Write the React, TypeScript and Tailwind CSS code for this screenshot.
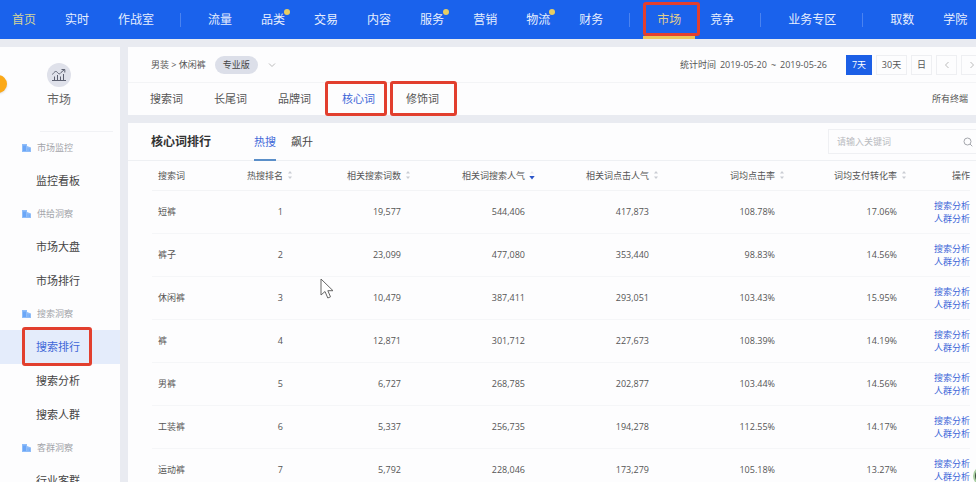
import React, { useState } from 'react';

const navGroups = [
  [{ label: '首页' }, { label: '实时' }, { label: '作战室' }],
  [
    { label: '流量' },
    { label: '品类', dot: true },
    { label: '交易' },
    { label: '内容' },
    { label: '服务', dot: true },
    { label: '营销' },
    { label: '物流', dot: true },
    { label: '财务' },
  ],
  [{ label: '市场' }, { label: '竞争' }],
  [{ label: '业务专区' }],
  [{ label: '取数' }, { label: '学院' }],
] as { label: string; dot?: boolean }[][];

const sideGroups = [
  { title: '市场监控', items: ['监控看板'] },
  { title: '供给洞察', items: ['市场大盘', '市场排行'] },
  { title: '搜索洞察', items: ['搜索排行', '搜索分析', '搜索人群'] },
  { title: '客群洞察', items: ['行业客群'] },
];

const wordTabs = ['搜索词', '长尾词', '品牌词', '核心词', '修饰词'];

const columns = [
  { label: '热搜排名', width: 'w-[90px]' },
  { label: '相关搜索词数', width: 'w-[118px]' },
  { label: '相关词搜索人气', width: 'w-[124px]', sorted: true },
  { label: '相关词点击人气', width: 'w-[124px]' },
  { label: '词均点击率', width: 'w-[126px]' },
  { label: '词均支付转化率', width: 'w-[122px]' },
];

const rows = [
  ['短裤', '1', '19,577', '544,406', '417,873', '108.78%', '17.06%'],
  ['裤子', '2', '23,099', '477,080', '353,440', '98.83%', '14.56%'],
  ['休闲裤', '3', '10,479', '387,411', '293,051', '103.43%', '15.95%'],
  ['裤', '4', '12,871', '301,712', '227,673', '108.39%', '14.19%'],
  ['男裤', '5', '6,727', '268,785', '202,877', '103.44%', '14.56%'],
  ['工装裤', '6', '5,337', '256,735', '194,278', '112.55%', '14.17%'],
  ['运动裤', '7', '5,792', '228,046', '173,279', '105.18%', '13.27%'],
];

function Marker({ className }: { className: string }) {
  return <span className={`pointer-events-none absolute z-10 rounded-[3px] border-3 border-[#e23f2e] ${className}`} />;
}

function Chevron({ className, d }: { className: string; d: string }) {
  return (
    <svg viewBox="0 0 8 8" fill="none" stroke="currentColor" className={className} aria-hidden="true">
      <path d={d} />
    </svg>
  );
}

function SortIcon({ sorted }: { sorted?: boolean }) {
  return (
    <svg viewBox="0 0 6 10" className="h-[10px] w-[6px] shrink-0" aria-hidden="true">
      <path d="M3 1 5 3.6H1Z" fill={sorted ? '#e3e5ea' : '#c9ccd3'} />
      <path d={sorted ? 'M0.3 6H5.7L3 9.4Z' : 'M1 6.4H5L3 9Z'} fill={sorted ? '#2b55c8' : '#c9ccd3'} />
    </svg>
  );
}

function TopNav() {
  return (
    <header className="h-[39px] overflow-hidden bg-[#1a62ec]">
      <nav className="flex h-full items-center pl-3 text-[12px] text-[#e6eefd]">
        {navGroups.map((group, i) => (
          <div
            key={i}
            className={i === 0 ? 'flex h-full shrink-0 items-center' : 'ml-[26px] flex h-full shrink-0 items-center'}
          >
            {i > 0 && <span className="mr-[27px] h-[14px] w-px bg-[#4b83f0]" />}
            <ul className="-mx-[14px] flex h-full gap-px">
              {group.map(({ label, dot }) => {
                const active = label === '市场';
                return (
                  <li key={label} className="relative">
                    <a
                      href="#"
                      className={`flex h-full items-center whitespace-nowrap px-[14px] ${
                        active ? 'border-b-3 border-[#e9c65a] pt-[3px] text-[#e3cf8d]' : ''
                      } ${label === '首页' ? 'text-[#d3d49a]' : ''}`}
                    >
                      {label}
                    </a>
                    {dot && <span className="absolute right-[9px] top-[9px] size-[6px] rounded-full bg-[#e8cd62]" />}
                    {active && <Marker className="-right-[5px] left-0 top-[2px] h-[34px]" />}
                  </li>
                );
              })}
            </ul>
          </div>
        ))}
      </nav>
    </header>
  );
}

function Sidebar() {
  return (
    <aside className="relative w-[120px] shrink-0 bg-[#fdfdfe]">
      <span className="absolute -left-[11px] top-[28px] size-[18px] rounded-full bg-[#fba919] shadow" />
      <div className="mr-[7px] ml-10 h-[85px] border-b border-[#f1f2f5]">
        <div className="flex w-[38px] flex-col items-center pt-4">
          <span className="flex size-6 items-center justify-center rounded-full bg-[#dfe1ea] text-[#5c6070]">
            <svg viewBox="0 0 16 16" fill="none" stroke="currentColor" className="size-4" aria-hidden="true">
              <path d="M1 13.5H15M3.5 13V9.5M6.5 13V8M9.5 13V9.5M12.5 13V7" />
              <path d="M1.5 7.5C3.5 4.5 5 3.5 6.5 5.5S9 7 10 5.5L13.5 2.5M10.5 2.5H13.8V5.5" />
            </svg>
          </span>
          <span className="mt-1 text-[12px] leading-[18px] text-[#666]">市场</span>
        </div>
      </div>
      {sideGroups.map((group) => (
        <section key={group.title}>
          <h2 className="flex h-8 items-center gap-[6px] pl-[22px] text-[9px] text-[#a3a5aa]">
            <svg viewBox="0 0 9 8" className="h-2 w-[9px]" aria-hidden="true">
              <path d="M0 0H5V2L9 3.5V8H0Z" fill="#8fbdf9" />
              <path d="M1 1.5H4V7H1Z" fill="#6aa6f7" />
              <path d="M6 4V7M7.5 4.5V7" stroke="#6aa6f7" strokeWidth="0.7" />
            </svg>
            {group.title}
          </h2>
          <ul>
            {group.items.map((item) => {
              const active = item === '搜索排行';
              return (
                <li key={item} className="relative">
                  <a
                    href="#"
                    className={`flex h-[34px] items-center pl-9 text-[11px] ${
                      active ? 'bg-[#e4ecfb] text-[#4067d8]' : 'text-[#444]'
                    }`}
                  >
                    {item}
                  </a>
                  {active && <Marker className="-top-[3px] left-[22px] h-[39px] w-[70px]" />}
                </li>
              );
            })}
          </ul>
        </section>
      ))}
    </aside>
  );
}

function FilterCard() {
  const [tab, setTab] = useState('核心词');
  const box = 'flex h-5 items-center justify-center border border-[#eeeff2]';

  return (
    <section className="bg-[#fdfdfe] text-[9px] text-[#555]">
      <div className="-mr-[6px] flex h-9 items-center justify-between border-b border-[#f3f4f6] pl-[23px]">
        <div className="flex items-center">
          <span>男装 &gt; 休闲裤</span>
          <button type="button" className="ml-[9px] flex items-center gap-[10px]">
            <span className="flex h-[18px] items-center rounded-full bg-[#dcdfe9] px-2 text-[#444]">专业版</span>
            <Chevron className="size-2 text-[#bbb]" d="M1 2.5 4 5.5 7 2.5" />
          </button>
        </div>
        <div className="flex items-center gap-1">
          <span className="mr-[15px] flex gap-1">
            <span>统计时间</span>
            <span>2019-05-20</span>
            <span>~</span>
            <span>2019-05-26</span>
          </span>
          <button type="button" className="h-5 w-[26px] bg-[#1c5fe6] text-white">7天</button>
          <button type="button" className={`${box} w-[31px]`}>30天</button>
          <button type="button" className={`${box} w-[21px]`}>日</button>
          <button type="button" aria-label="上一周期" className={`${box} w-[21px] text-[#bbb]`}>
            <Chevron className="size-2" d="M5.5 1 2.5 4 5.5 7" />
          </button>
          <button type="button" aria-label="下一周期" className={`${box} w-[21px] text-[#bbb]`}>
            <Chevron className="size-2" d="M2.5 1 5.5 4 2.5 7" />
          </button>
        </div>
      </div>
      <div className="flex h-8 items-center justify-between pl-[22px]">
        <div className="flex h-full gap-[31px] text-[11px]">
          {wordTabs.map((t) => (
            <div key={t} className="relative">
              <button
                type="button"
                onClick={() => setTab(t)}
                className={`h-full ${t === tab ? 'text-[#4067d8]' : 'text-[#555]'}`}
              >
                {t}
              </button>
              {t === '核心词' && <Marker className="-left-[17px] -top-[2px] h-[35px] w-[62px]" />}
              {t === '修饰词' && <Marker className="-left-[16px] -top-[2px] h-[35px] w-[67px]" />}
            </div>
          ))}
        </div>
        <select aria-label="终端" className="-mr-3 w-14 appearance-none bg-transparent">
          <option>所有终端</option>
        </select>
      </div>
    </section>
  );
}

function RankingCard() {
  const [mode, setMode] = useState('热搜');

  return (
    <section className="flex-1 bg-[#fdfdfe]">
      <div className="flex h-[38px] items-stretch border-b border-[#eef0f3] pl-[23px]">
        <h1 className="flex items-center text-[12px] font-bold text-[#333]">核心词排行</h1>
        <div className="ml-[43px] flex gap-[15px] text-[11px]">
          {['热搜', '飙升'].map((m) => (
            <button
              key={m}
              type="button"
              onClick={() => setMode(m)}
              className={`-mb-px border-b-2 pt-[2px] ${
                m === mode ? 'border-[#5b8fc9] text-[#4067d8]' : 'border-transparent text-[#444]'
              }`}
            >
              {m}
            </button>
          ))}
        </div>
        <label className="-mr-[6px] ml-auto flex h-[25px] w-[154px] items-center self-center border border-[#eff0f3] pr-2 pl-2">
          <input
            type="text"
            aria-label="关键词"
            placeholder="请输入关键词"
            className="min-w-0 flex-1 text-[9px] text-[#555] outline-none placeholder:text-[#b9bbc0]"
          />
          <svg viewBox="0 0 10 10" fill="none" stroke="#a5a7ad" className="size-[10px]" aria-hidden="true">
            <circle cx="4.5" cy="4.5" r="3.5" />
            <path d="M7 7 9.3 9.3" />
          </svg>
        </label>
      </div>
      <div className="pr-[6px] pl-6">
        <table className="w-full table-fixed border-collapse text-[9px] text-[#555]">
          <thead>
            <tr className="h-[29px] border-b border-[#f3f4f6]">
              <th className="w-[51px] pl-[6px] text-left font-normal whitespace-nowrap">搜索词</th>
              {columns.map((col) => (
                <th key={col.label} className={`${col.width} font-normal`}>
                  <div className="flex items-center justify-end gap-1 whitespace-nowrap">
                    {col.label}
                    <SortIcon sorted={col.sorted} />
                  </div>
                </th>
              ))}
              <th className="w-[63px] text-right font-normal">操作</th>
            </tr>
          </thead>
          <tbody>
            {rows.map(([word, ...values]) => (
              <tr key={word} className="h-[43px] border-b border-[#f5f6f8]">
                <td className="pl-[6px] whitespace-nowrap">{word}</td>
                {values.map((v, i) => (
                  <td key={i} className="pr-[10px] text-right">{v}</td>
                ))}
                <td className="text-right leading-[13px] text-[#4067d8]">
                  <a href="#" className="block">搜索分析</a>
                  <a href="#" className="block">人群分析</a>
                </td>
              </tr>
            ))}
          </tbody>
        </table>
      </div>
    </section>
  );
}

export default function App() {
  return (
    <div className="relative h-screen overflow-hidden bg-[#e9ebf1] font-['Open_Sans','Noto_Sans_CJK_SC',sans-serif]">
      <TopNav />
      <div className="flex gap-2 pt-2">
        <Sidebar />
        <main className="flex min-w-0 flex-1 flex-col gap-2 overflow-hidden">
          <FilterCard />
          <RankingCard />
        </main>
      </div>
      <svg viewBox="0 0 14 21" className="absolute left-[320px] top-[278px] h-[21px] w-[14px]" aria-hidden="true">
        <path d="M1 1V17L5 13.5L7.8 20L10.5 18.8L7.8 12.7H13Z" fill="#fff" stroke="#666" />
      </svg>
      <span className="absolute -right-[17px] -bottom-[4px] size-5 rounded-full border-2 border-[#a9cfa2] bg-[#3c4a3c]" />
    </div>
  );
}
